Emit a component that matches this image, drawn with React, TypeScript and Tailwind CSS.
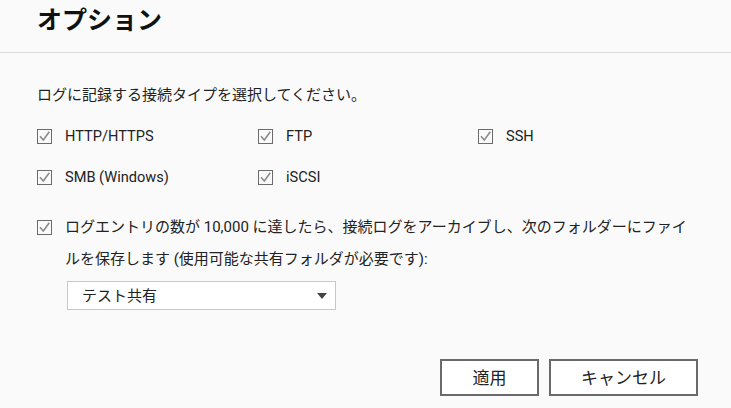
import React from "react";

const font = { fontFamily: 'Roboto, "Noto Sans CJK JP", sans-serif' };

function Check() {
  return (
    <svg width="15" height="15" viewBox="0 0 15 15" className="shrink-0">
      <rect x="0.5" y="0.5" width="14" height="14" fill="#fafafa" stroke="#6b6b6b" />
      <path d="M3 7.2 L6.3 11 L12.3 2.8" fill="none" stroke="#8a8a8a" strokeWidth="1.6" />
    </svg>
  );
}

function Item({ label }: { label: string }) {
  return (
    <div className="flex items-center">
      <Check />
      <span className="ml-[13px] text-[14.6px] leading-[20px] text-[#222]">{label}</span>
    </div>
  );
}

export default function App() {
  return (
    <div className="w-[731px] h-[408px] bg-[#fafafa] text-[#222] overflow-hidden" style={font}>
      <div className="h-[53px] border-b border-[#dcdcdc] pl-[37px] pt-[6px]">
        <div className="text-[25px] leading-[30px] font-bold text-[#111]">オプション</div>
      </div>
      <div className="pl-[37px] flex flex-col">
        <div className="mt-[32px] text-[15px] leading-[20px]">ログに記録する接続タイプを選択してください。</div>
        <div className="mt-[21px] flex h-[20px]">
          <div className="w-[221px]"><Item label="HTTP/HTTPS" /></div>
          <div className="w-[220px]"><Item label="FTP" /></div>
          <Item label="SSH" />
        </div>
        <div className="mt-[21px] flex h-[20px]">
          <div className="w-[221px]"><Item label="SMB (Windows)" /></div>
          <Item label="iSCSI" />
        </div>
        <div className="mt-[24px] flex items-start">
          <div className="pt-[9px]"><Check /></div>
          <div className="ml-[13px] text-[15px] leading-[32px] whitespace-nowrap">
            <div>ログエントリの数が 10,000 に達したら、接続ログをアーカイブし、次のフォルダーにファイ</div>
            <div>ルを保存します (使用可能な共有フォルダが必要です):</div>
          </div>
        </div>
        <div className="mt-[6px] ml-[30px] w-[269px] h-[29px] bg-white border border-[#c8c8c8] flex items-center justify-between pl-[14px] pr-[8px]">
          <span className="text-[15px] leading-[20px]">テスト共有</span>
          <svg width="10" height="6" viewBox="0 0 10 6"><path d="M0 0 H10 L5 6 Z" fill="#444" /></svg>
        </div>
        <div className="mt-[49px] flex justify-end gap-[10px] pr-[33px]">
          <button className="w-[99px] h-[37px] bg-white border-2 border-[#6a6a6a] text-[17px] leading-[20px] text-[#222]" style={font}>適用</button>
          <button className="w-[149px] h-[37px] bg-white border-2 border-[#6a6a6a] text-[17px] leading-[20px] text-[#222]" style={font}>キャンセル</button>
        </div>
      </div>
    </div>
  );
}
